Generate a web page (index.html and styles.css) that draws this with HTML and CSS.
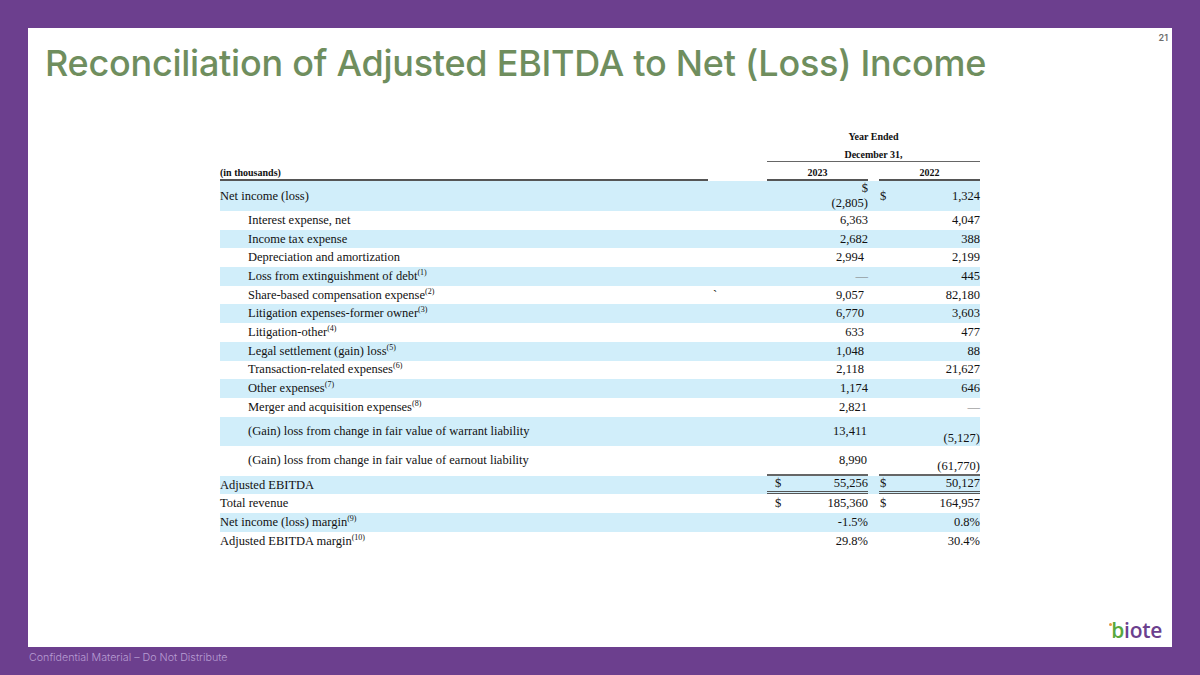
FILE: index.html
```html
<!DOCTYPE html>
<html lang="en">
<head>
<meta charset="utf-8">
<title>Reconciliation of Adjusted EBITDA to Net (Loss) Income</title>
<link rel="stylesheet" href="styles.css">
</head>
<body>
<div class="slide">
  <div class="head">
    <h1 class="title">Reconciliation of Adjusted EBITDA to Net (Loss) Income</h1>
    <span class="pnum">21</span>
  </div>
  <table class="fin">
    <colgroup>
      <col class="c-label"><col class="c-sp"><col class="c-v"><col class="c-gap"><col class="c-v">
    </colgroup>
    <thead>
      <tr class="h1"><td></td><td></td><th colspan="3">Year Ended</th></tr>
      <tr class="h2"><td></td><td></td><th colspan="3" class="ul">December 31,</th></tr>
      <tr class="h3"><th class="lbl">(in thousands)</th><td></td><th class="ul">2023</th><td></td><th class="ul">2022</th></tr>
    </thead>
    <tbody>
      <tr class="r tall b"><td>Net income (loss)</td><td></td><td class="v">$<br>(2,805)</td><td></td><td class="v"><span class="dl dl2">$</span>1,324</td></tr>
      <tr class="r"><td class="ind">Interest expense, net</td><td></td><td class="v">6,363</td><td></td><td class="v">4,047</td></tr>
      <tr class="r b"><td class="ind">Income tax expense</td><td></td><td class="v">2,682</td><td></td><td class="v">388</td></tr>
      <tr class="r"><td class="ind">Depreciation and amortization</td><td></td><td class="v p4">2,994</td><td></td><td class="v">2,199</td></tr>
      <tr class="r b"><td class="ind">Loss from extinguishment of debt<sup>(1)</sup></td><td></td><td class="v dash">—</td><td></td><td class="v">445</td></tr>
      <tr class="r"><td class="ind">Share-based compensation expense<sup>(2)</sup></td><td class="tick">`</td><td class="v p4">9,057</td><td></td><td class="v">82,180</td></tr>
      <tr class="r b"><td class="ind">Litigation expenses-former owner<sup>(3)</sup></td><td></td><td class="v p4">6,770</td><td></td><td class="v">3,603</td></tr>
      <tr class="r"><td class="ind">Litigation-other<sup>(4)</sup></td><td></td><td class="v p4">633</td><td></td><td class="v">477</td></tr>
      <tr class="r b"><td class="ind">Legal settlement (gain) loss<sup>(5)</sup></td><td></td><td class="v p4">1,048</td><td></td><td class="v">88</td></tr>
      <tr class="r"><td class="ind">Transaction-related expenses<sup>(6)</sup></td><td></td><td class="v p4">2,118</td><td></td><td class="v">21,627</td></tr>
      <tr class="r b"><td class="ind">Other expenses<sup>(7)</sup></td><td></td><td class="v">1,174</td><td></td><td class="v">646</td></tr>
      <tr class="r"><td class="ind">Merger and acquisition expenses<sup>(8)</sup></td><td></td><td class="v p1">2,821</td><td></td><td class="v dash">—</td></tr>
      <tr class="r dbl b"><td class="ind top">(Gain) loss from change in fair value of warrant liability</td><td></td><td class="v top p1">13,411</td><td></td><td class="v bot">(5,127)</td></tr>
      <tr class="r dbl"><td class="ind top">(Gain) loss from change in fair value of earnout liability</td><td></td><td class="v top p1 sub">8,990</td><td></td><td class="v bot sub">(61,770)</td></tr>
      <tr class="r b"><td>Adjusted EBITDA</td><td></td><td class="v tot"><span class="dl">$</span>55,256</td><td></td><td class="v tot"><span class="dl dl2">$</span>50,127</td></tr>
      <tr class="r"><td>Total revenue</td><td></td><td class="v"><span class="dl">$</span>185,360</td><td></td><td class="v"><span class="dl dl2">$</span>164,957</td></tr>
      <tr class="r b"><td>Net income (loss) margin<sup>(9)</sup></td><td></td><td class="v">-1.5%</td><td></td><td class="v">0.8%</td></tr>
      <tr class="r"><td>Adjusted EBITDA margin<sup>(10)</sup></td><td></td><td class="v">29.8%</td><td></td><td class="v">30.4%</td></tr>
    </tbody>
  </table>
  <div class="logo-row">
    <div class="logo"><span class="lb">b</span><span class="li">iote</span></div>
  </div>
</div>
<p class="foot">Confidential Material – Do Not Distribute</p>
</body>
</html>
```

FILE: styles.css
```css
html, body {
  margin: 0;
  padding: 0;
}
body {
  width: 1200px;
  height: 675px;
  background: #6c3f8e;
  padding: 28px 28px 0 28px;
  box-sizing: border-box;
  overflow: hidden;
}
.slide {
  background: #ffffff;
  height: 619px;
  display: flex;
  flex-direction: column;
  padding: 4px 4px 0 17px;
  box-sizing: border-box;
}
.head {
  display: flex;
  justify-content: space-between;
  align-items: flex-start;
}
.title {
  margin: 9px 0 0 0;
  font-family: Inter, "Open Sans", sans-serif;
  font-weight: 500;
  font-size: 36px;
  line-height: 44px;
  color: #6f8e5e;
  letter-spacing: -0.25px;
  white-space: nowrap;
}
.pnum {
  font-family: Inter, sans-serif;
  font-weight: 600;
  font-size: 9px;
  line-height: 11px;
  color: #6d6d6d;
}
.fin {
  margin: 40px 0 0 175px;
  width: 760px;
  table-layout: fixed;
  border-collapse: separate;
  border-spacing: 0;
  font-family: "Liberation Serif", "Times New Roman", serif;
  font-size: 12.5px;
  color: #111;
}
.c-label { width: 488px; }
.c-sp { width: 59px; }
.c-v { width: 101px; }
.c-gap { width: 11px; }
.fin td, .fin th {
  padding: 0;
  line-height: 15px;
  white-space: nowrap;
}
.fin thead th {
  font-weight: bold;
  font-size: 10px;
  text-align: center;
}
.fin .h1 { height: 22px; }
.fin .h1 th { vertical-align: middle; }
.fin .h2 { height: 15px; }
.fin .h2 th { vertical-align: bottom; line-height: 12px; }
.fin .h3 { height: 19px; }
.fin .h3 th { vertical-align: bottom; line-height: 13px; }
.fin th.ul { border-bottom: 1px solid #666; }
.fin th.lbl { text-align: left; border-bottom: 2px solid #555; }
.fin .h3 th.ul { border-bottom: 2px solid #555; }
.fin .r { height: 18.7px; }
.fin .r.tall { height: 29px; }
.fin .r.dbl { height: 29.6px; }
.fin .r td { vertical-align: middle; }
.fin .r.b td { background: #d1eefa; }
.fin .ind { padding-left: 28px; }
.fin .v { text-align: right; }
.fin .p4 { padding-right: 4px; }
.fin .p1 { padding-right: 1px; }
.fin .dash { color: #777; }
.fin td.top { vertical-align: top; padding-top: 7px; }
.fin td.bot { vertical-align: bottom; }
.fin td.sub { border-bottom: 2px solid #666; }
.fin td.tot { border-bottom: 3px double #555; }
.fin .tick { padding-left: 5px; vertical-align: middle; }
.dl { float: left; padding-left: 8px; }
.dl2 { padding-left: 1px; }
sup {
  font-size: 8px;
  line-height: 0;
  vertical-align: 5px;
}
.logo-row {
  margin-top: auto;
  display: flex;
  justify-content: flex-end;
  padding: 0 6px 5px 0;
}
.logo {
  position: relative;
  font-family: "Open Sans", sans-serif;
  font-weight: 600;
  font-size: 21px;
  line-height: 24px;
  letter-spacing: -0.3px;
}
.logo::before {
  content: "";
  position: absolute;
  left: -2px;
  top: 5px;
  width: 3px;
  height: 3px;
  border-radius: 50%;
  background: #e59a3c;
}
.lb { color: #58a83c; }
.li { color: #6c3f8e; }
.foot {
  margin: 4px 0 0 1px;
  font-family: Inter, "Open Sans", sans-serif;
  font-weight: 300;
  font-size: 10.7px;
  line-height: 14px;
  color: #b89dd3;
}
```
